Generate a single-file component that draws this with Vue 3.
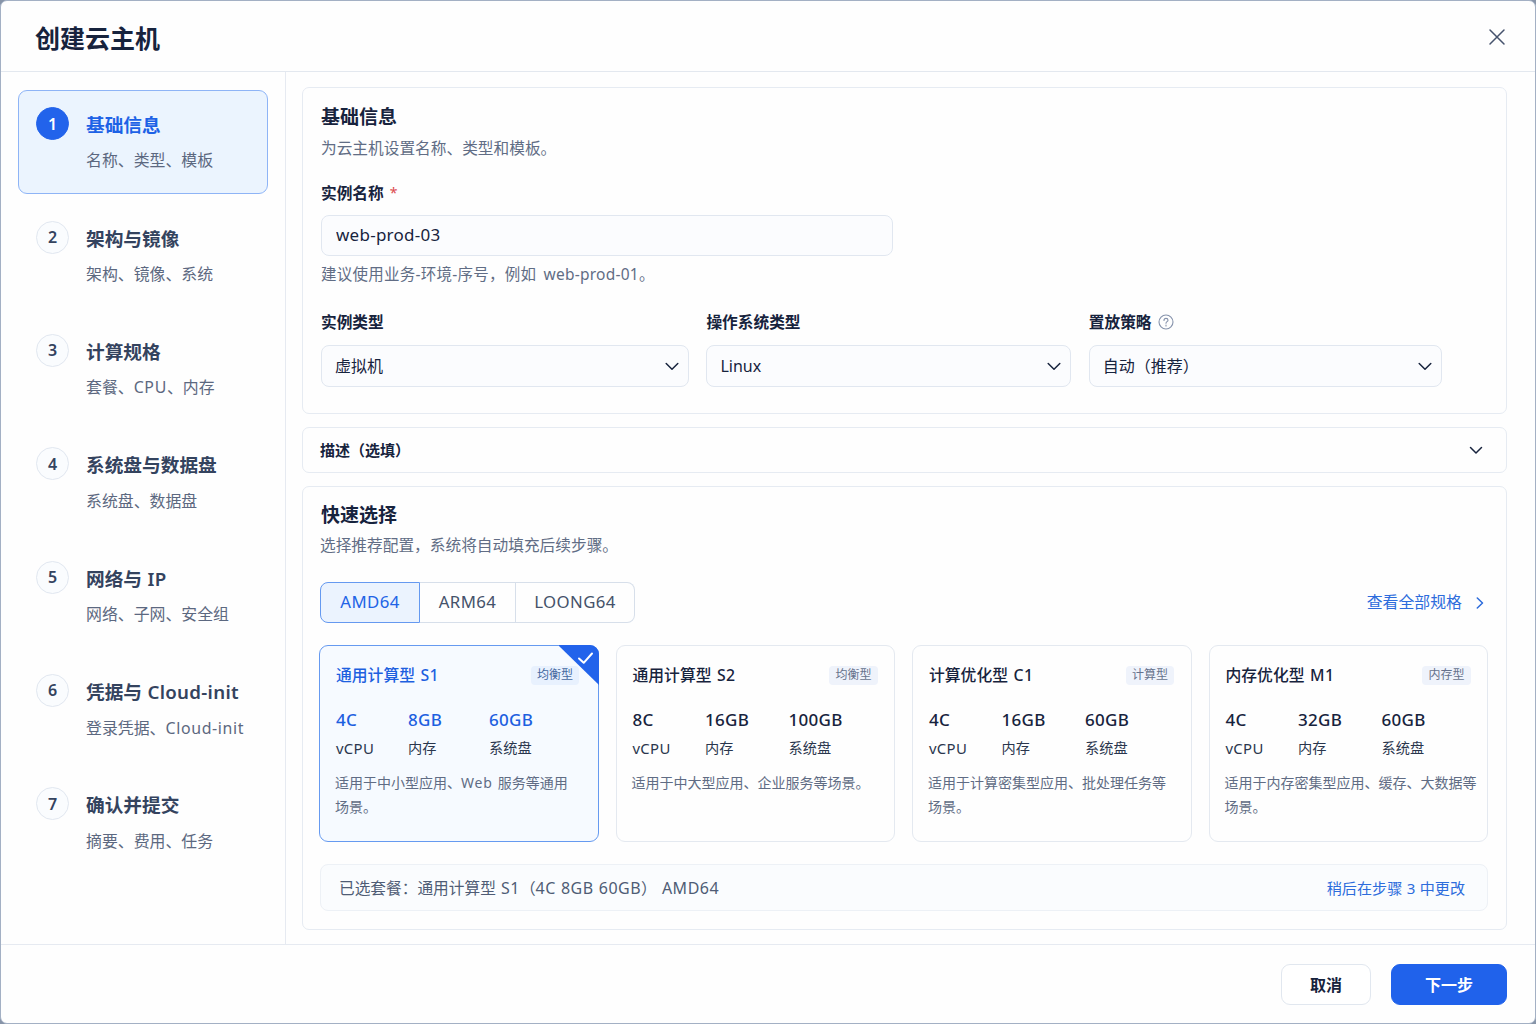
<template>
  <div class="dialog">
    <header class="dialog-header">
      <h1>创建云主机</h1>
      <button class="close" type="button" aria-label="关闭">
        <svg width="18" height="18" viewBox="0 0 18 18">
          <path d="M2 2l14 14M16 2L2 16" />
        </svg>
      </button>
    </header>

    <div class="dialog-body">
      <nav class="steps">
        <div
          v-for="(step, index) in steps"
          :key="step.title"
          class="step"
          :class="{ active: currentStep === index + 1 }"
          @click="currentStep = index + 1"
        >
          <span class="step-number">{{ index + 1 }}</span>
          <div class="step-text">
            <div class="step-title"><MixedText :text="step.title" /></div>
            <div class="step-sub"><MixedText :text="step.sub" /></div>
          </div>
        </div>
      </nav>

      <main class="content">
        <section class="panel basic">
          <h2>基础信息</h2>
          <p class="panel-desc">为云主机设置名称、类型和模板。</p>

          <label class="field-label name-label" for="name">实例名称 <span class="required">*</span></label>
          <input id="name" v-model="form.name" class="control name-input" type="text" />
          <p class="hint">建议使用业务-环境-序号，例如 web-prod-01。</p>

          <div class="select-row">
            <div v-for="field in selects" :key="field.key">
              <label class="field-label" :for="field.key">
                {{ field.label }}
                <svg v-if="field.help" class="help" width="16" height="16" viewBox="0 0 16 16">
                  <circle cx="8" cy="8" r="7" />
                  <path d="M6 6.4c0-1.2.9-2 2-2s2 .8 2 1.8c0 1.400-2 1.500-2 3" />
                  <path d="M8 11.100v.9" />
                </svg>
              </label>
              <div class="select-wrap">
                <select :id="field.key" v-model="form[field.key]" class="control">
                  <option v-for="option in field.options" :key="option" :value="option">{{ option }}</option>
                </select>
                <svg class="chevron" width="14" height="9" viewBox="0 0 14 9">
                  <path d="M1.200 1.500L7 7.200l5.800-5.700" />
                </svg>
              </div>
            </div>
          </div>
        </section>

        <section class="panel description">
          <span>描述（选填）</span>
          <svg width="14" height="9" viewBox="0 0 14 9">
            <path d="M1.500 1.500L7 7l5.500-5.500" />
          </svg>
        </section>

        <section class="panel quick">
          <h2>快速选择</h2>
          <p class="panel-desc">选择推荐配置，系统将自动填充后续步骤。</p>

          <div class="toolbar">
            <div class="tabs">
              <button
                v-for="item in archs"
                :key="item"
                type="button"
                :class="{ active: arch === item }"
                @click="arch = item"
              >{{ item }}</button>
            </div>
            <a class="all-link">
              查看全部规格
              <svg width="8" height="12" viewBox="0 0 8 12">
                <path d="M1.300 1l5.200 5-5.200 5" />
              </svg>
            </a>
          </div>

          <div class="plans">
            <div
              v-for="plan in plans"
              :key="plan.name"
              class="plan"
              :class="{ selected: selected.name === plan.name }"
              @click="selected = plan"
            >
              <div class="plan-head">
                <h3><MixedText :text="plan.name" /></h3>
                <span class="tag">{{ plan.tag }}</span>
              </div>
              <div class="specs">
                <div><b>{{ plan.cpu }}</b><span>vCPU</span></div>
                <div><b>{{ plan.memory }}</b><span>内存</span></div>
                <div><b>{{ plan.disk }}</b><span>系统盘</span></div>
              </div>
              <div class="plan-desc">
                <p v-for="line in plan.desc" :key="line"><MixedText :text="line" /></p>
              </div>
              <svg v-if="selected.name === plan.name" class="corner" width="40" height="40" viewBox="0 0 40 40">
                <path class="corner-bg" d="M-1 0h32a9 9 0 0 1 9 9v31z" />
                <path class="corner-check" d="M20 13.500l4.700 4.300 8.300-9.300" />
              </svg>
            </div>
          </div>

          <div class="summary">
            <MixedText :text="summary" />
            <a>稍后在步骤 3 中更改</a>
          </div>
        </section>
      </main>
    </div>

    <footer class="dialog-footer">
      <button class="btn cancel" type="button">取消</button>
      <button class="btn next" type="button">下一步</button>
    </footer>
  </div>
</template>

<script setup>
import { ref, reactive, computed, h } from 'vue'

// Wraps latin runs in their own span so they can be spaced a bit wider than Chinese
const MixedText = (props) =>
  h(
    'span',
    props.text
      .split(/([A-Za-z0-9-]+)/)
      .filter(Boolean)
      .map((part) => (/^[A-Za-z0-9-]/.test(part) ? h('span', { class: 'latin' }, part) : part))
  )
MixedText.props = ['text']

const currentStep = ref(1)

const steps = [
  { title: '基础信息', sub: '名称、类型、模板' },
  { title: '架构与镜像', sub: '架构、镜像、系统' },
  { title: '计算规格', sub: '套餐、CPU、内存' },
  { title: '系统盘与数据盘', sub: '系统盘、数据盘' },
  { title: '网络与 IP', sub: '网络、子网、安全组' },
  { title: '凭据与 Cloud-init', sub: '登录凭据、Cloud-init' },
  { title: '确认并提交', sub: '摘要、费用、任务' }
]

const form = reactive({
  name: 'web-prod-03',
  type: '虚拟机',
  os: 'Linux',
  placement: '自动（推荐）'
})

const selects = [
  { key: 'type', label: '实例类型', options: ['虚拟机'] },
  { key: 'os', label: '操作系统类型', options: ['Linux', 'Windows'] },
  { key: 'placement', label: '置放策略', help: true, options: ['自动（推荐）'] }
]

const archs = ['AMD64', 'ARM64', 'LOONG64']
const arch = ref('AMD64')

const plans = [
  {
    name: '通用计算型 S1',
    tag: '均衡型',
    cpu: '4C',
    memory: '8GB',
    disk: '60GB',
    desc: ['适用于中小型应用、Web 服务等通用', '场景。']
  },
  {
    name: '通用计算型 S2',
    tag: '均衡型',
    cpu: '8C',
    memory: '16GB',
    disk: '100GB',
    desc: ['适用于中大型应用、企业服务等场景。']
  },
  {
    name: '计算优化型 C1',
    tag: '计算型',
    cpu: '4C',
    memory: '16GB',
    disk: '60GB',
    desc: ['适用于计算密集型应用、批处理任务等', '场景。']
  },
  {
    name: '内存优化型 M1',
    tag: '内存型',
    cpu: '4C',
    memory: '32GB',
    disk: '60GB',
    desc: ['适用于内存密集型应用、缓存、大数据等', '场景。']
  }
]
const selected = ref(plans[0])

const summary = computed(() => {
  const { name, cpu, memory, disk } = selected.value
  return `已选套餐：${name}（${cpu} ${memory} ${disk}） ${arch.value}`
})
</script>

<style>
body {
  background: #8794a8;
}
</style>

<style scoped>
.dialog,
.dialog * {
  box-sizing: border-box;
}

.dialog {
  display: flex;
  flex-direction: column;
  width: 1536px;
  height: 1024px;
  overflow: hidden;
  border: 1px solid #a3b0c4;
  border-radius: 7px;
  background: #fefefe;
  color: #17233d;
  font-family: "Noto Sans", "Noto Sans CJK SC", sans-serif;
  font-size: 15.7px;
}

h1, h2, h3, p {
  margin: 0;
}

button, input, select {
  font-family: inherit;
  color: inherit;
}

button {
  padding: 0;
  cursor: pointer;
}

svg {
  fill: none;
  stroke: currentColor;
  stroke-width: 1.5;
  stroke-linecap: round;
  stroke-linejoin: round;
}

.dialog-header {
  display: flex;
  align-items: center;
  justify-content: space-between;
  flex: none;
  height: 71px;
  padding: 3px 29px 0 34px;
  border-bottom: 1px solid #e3e8ef;
}

h1 {
  font-size: 25px;
  line-height: 36px;
  font-weight: 700;
}

.close {
  display: flex;
  margin-top: -2px;
  border: 0;
  background: none;
  color: #46536d;
}

.dialog-body {
  display: flex;
  flex: 1;
  min-height: 0;
}

/* steps */
.steps {
  display: flex;
  flex-direction: column;
  gap: 9.3px;
  flex: none;
  width: 285px;
  padding: 18.4px 17px 0 17px;
  border-right: 1px solid #e6eaf1;
}

.step {
  display: flex;
  align-items: flex-start;
  gap: 17px;
  height: 104px;
  padding: 16px 0 0 17px;
  border: 1px solid transparent;
  border-radius: 9px;
  color: #34435e;
}

.step.active {
  border-color: #8eb4f6;
  background: #ebf4fe;
}

.step-number {
  display: flex;
  align-items: center;
  justify-content: center;
  width: 33px;
  height: 33px;
  border: 1px solid #e1e7f0;
  border-radius: 50%;
  background: #fafcfe;
  font-size: 16px;
  font-weight: 600;
}

.active .step-number {
  border-color: #2263eb;
  background: #2263eb;
  color: #fff;
}

.step-title {
  padding-top: 4px;
  font-size: 18.7px;
  line-height: 28px;
  font-weight: 600;
  word-spacing: 0.5px;
  white-space: nowrap;
}

.step-title :deep(.latin) {
  letter-spacing: 0.3px;
}

.active .step-title {
  color: #1d62e6;
}

.step-sub {
  margin-top: 8px;
  font-size: 15.9px;
  line-height: 26px;
  color: #5c6880;
  white-space: nowrap;
}

.step-sub :deep(.latin) {
  letter-spacing: 0.65px;
}

.step:nth-child(4) .step-sub,
.step:nth-child(n + 6) .step-sub {
  margin-top: 9px;
}

/* panels */
.content {
  display: flex;
  flex-direction: column;
  gap: 13px;
  flex: 1;
  padding: 15px 28px 0 16px;
}

.panel {
  flex: none;
  border: 1px solid #e6ebf2;
  border-radius: 7px;
  padding: 15px 18px 0 18px;
}

.basic {
  height: 327px;
}

.description {
  display: flex;
  align-items: center;
  justify-content: space-between;
  height: 46px;
  padding: 0 23px 0 17px;
  font-size: 15px;
  font-weight: 600;
}

.description span {
  margin-top: -1px;
}

.quick {
  height: 444px;
  padding: 14px 18px 0 17px;
}

.quick h2 {
  padding-left: 1px;
}

h2 {
  font-size: 19px;
  line-height: 28px;
  font-weight: 700;
}

.panel-desc {
  margin-top: 5px;
  line-height: 24px;
  color: #616d85;
}

.field-label {
  display: flex;
  align-items: center;
  gap: 6px;
  height: 24px;
  font-weight: 600;
  font-size: 15.7px;
}

.name-label {
  margin-top: 20px;
}

.required {
  color: #dc4a4f;
  font-size: 14px;
  font-weight: 400;
}

.control {
  display: block;
  width: 100%;
  height: 42px;
  padding: 0 13px;
  border: 1px solid #e1e7f0;
  border-radius: 8px;
  outline: 0;
  background: #fbfcfe;
  font-size: 16px;
  appearance: none;
}

.name-input {
  width: 572px;
  height: 41px;
  margin-top: 11px;
  padding: 0 14px 2px;
  font-size: 17px;
  letter-spacing: 0.25px;
}

.hint {
  margin-top: 6px;
  line-height: 24px;
  font-size: 15.5px;
  letter-spacing: 0.25px;
  word-spacing: 3px;
  color: #616d85;
}

.select-row {
  display: grid;
  grid-template-columns: 368px 365px 353px;
  gap: 17.4px;
  margin-top: 23px;
}

.select-wrap {
  position: relative;
  margin-top: 12px;
}

.chevron {
  position: absolute;
  top: 17px;
  right: 10px;
}

.help {
  margin-top: 1px;
  color: #8592ab;
  stroke-width: 1.1;
}

/* quick selection */
.quick .panel-desc {
  margin-top: 4px;
}

.toolbar {
  display: flex;
  align-items: center;
  justify-content: space-between;
  margin-top: 25px;
}

.tabs {
  display: grid;
  grid-template-columns: 100px 96px 119px;
  height: 41px;
}

.tabs button {
  padding-bottom: 2px;
  border: 1px solid #d7dfea;
  border-left: 0;
  background: none;
  color: #45526a;
  font-size: 16.8px;
  letter-spacing: 0.4px;
}

.tabs button:first-child {
  border-left: 1px solid #d7dfea;
  border-radius: 8px 0 0 8px;
}

.tabs button:last-child {
  border-radius: 0 8px 8px 0;
}

.tabs button.active {
  border-color: #6599f0;
  border-left: 1px solid #6599f0;
  background: #ebf3fe;
  color: #2163e6;
}

a {
  color: #2d6cdc;
  cursor: pointer;
}

.all-link {
  display: flex;
  align-items: center;
  gap: 14px;
  padding: 0 4px 2px 0;
  font-size: 15.9px;
}

.all-link svg {
  margin-top: 2px;
}

.plans {
  display: grid;
  grid-template-columns: repeat(4, 1fr);
  gap: 17px;
  margin: 22px 0 0 -1px;
}

.plan {
  position: relative;
  height: 197px;
  padding: 15px 0 0 16px;
  border: 1px solid #e4e9f0;
  border-radius: 9px;
}

.plan.selected {
  border-color: #669af0;
  background: #f6faff;
}

.plan-head {
  display: flex;
  align-items: center;
  justify-content: space-between;
  height: 26px;
  padding-right: 16.5px;
}

h3 {
  font-size: 15.8px;
  font-weight: 500;
  word-spacing: 1.5px;
}

h3 :deep(.latin) {
  letter-spacing: 0.3px;
}

.selected h3,
.selected b {
  color: #1d60df;
}

.tag {
  height: 19px;
  margin-top: 3px;
  padding: 0 6px;
  border-radius: 4px;
  background: #eff3fb;
  color: #66728c;
  font-size: 12px;
  line-height: 18px;
}

.selected .tag {
  margin-right: 2px;
  background: #e8f1fe;
  color: #45689f;
}

.specs {
  display: grid;
  grid-template-columns: 72.5px 83.5px auto;
  margin-top: 19px;
}

.selected .specs {
  grid-template-columns: 72px 81px auto;
}

.specs b,
.specs span {
  display: block;
  height: 28px;
  line-height: 28px;
}

.specs b {
  font-size: 17px;
  font-weight: 500;
  letter-spacing: 0.3px;
}

.specs span {
  font-size: 14.2px;
  color: #2a364d;
}

.specs div:first-child span {
  font-size: 14.9px;
  letter-spacing: 0.3px;
}

.plan-desc {
  margin: 9px 0 0 -1px;
  font-size: 14px;
  line-height: 24px;
  color: #606c84;
  word-spacing: 1.5px;
  white-space: nowrap;
}

.plan-desc :deep(.latin) {
  letter-spacing: 0.8px;
}

.corner {
  position: absolute;
  top: -1px;
  right: -1px;
}

.corner-bg {
  fill: #2263eb;
  stroke: none;
}

.corner-check {
  stroke: #fff;
  stroke-width: 2;
}

.summary {
  display: flex;
  align-items: center;
  justify-content: space-between;
  height: 47px;
  margin-top: 22px;
  padding: 0 22px 0 18px;
  border: 1px solid #edf1f6;
  border-radius: 8px;
  background: #fafcfe;
  color: #4f5c75;
  word-spacing: 1px;
}

.summary :deep(.latin) {
  font-size: 16px;
  letter-spacing: 0.5px;
}

.summary a {
  padding-bottom: 2px;
  font-size: 15.1px;
  word-spacing: 0.5px;
}

/* footer */
.dialog-footer {
  display: flex;
  align-items: center;
  justify-content: flex-end;
  gap: 20px;
  flex: none;
  height: 79px;
  padding-right: 28px;
  border-top: 1px solid #e6eaf1;
}

.btn {
  width: 90px;
  height: 41px;
  border: 1px solid #e1e7ef;
  border-radius: 9px;
  background: #fff;
  font-size: 16px;
  font-weight: 600;
}

.btn.next {
  width: 116px;
  border-color: #2062eb;
  background: #2062eb;
  color: #fff;
}
</style>
